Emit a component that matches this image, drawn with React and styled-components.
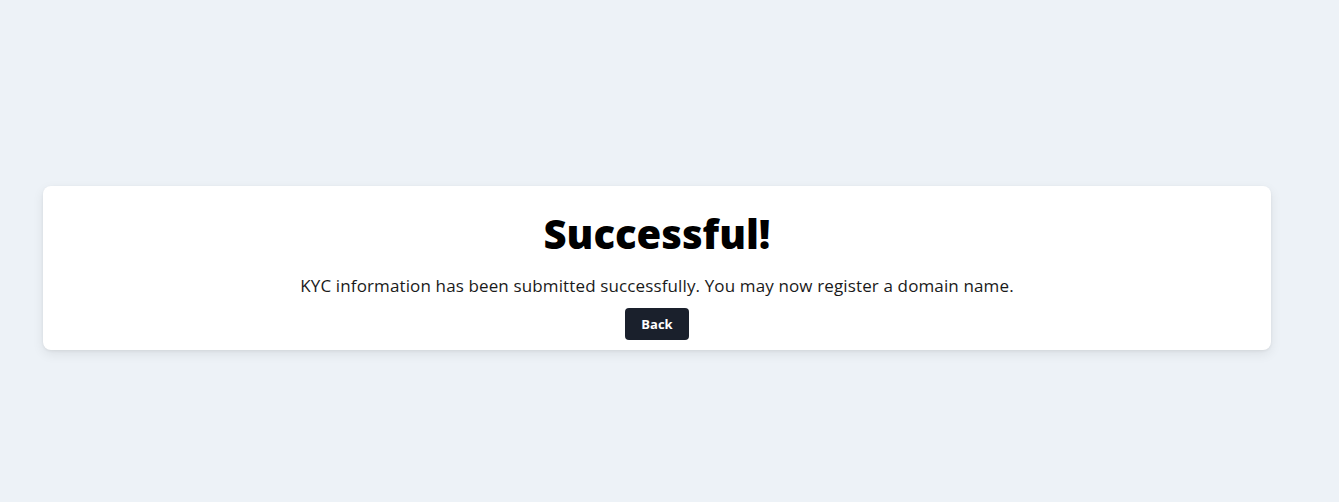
import React from "react";
import styled, { createGlobalStyle } from "styled-components";

const GlobalStyle = createGlobalStyle`
  html, body {
    margin: 0;
    padding: 0;
    background-color: #edf2f7;
    font-family: "Open Sans", "Liberation Sans", sans-serif;
  }
`;

const Page = styled.main`
  min-height: 502px;
  display: flex;
  align-items: center;
  padding: 34px 68px 0 43px;
  box-sizing: border-box;
`;

const Card = styled.section`
  flex: 1;
  background-color: #fff;
  border-radius: 8px;
  box-shadow: 0 4px 12px rgba(0, 0, 0, 0.08), 0 1px 3px rgba(0, 0, 0, 0.06);
  padding: 22px 20px 10px;
  display: flex;
  flex-direction: column;
  align-items: center;
`;

const Title = styled.h1`
  margin: 0;
  font-size: 40px;
  line-height: 52px;
  font-weight: 800;
  color: #000;
`;

const Message = styled.p`
  margin: 14px 0 10px;
  font-size: 17px;
  line-height: 24px;
  letter-spacing: 0.13px;
  color: #1a1a1a;
`;

const Button = styled.button`
  background-color: #1a202c;
  color: #fff;
  border: none;
  border-radius: 4px;
  height: 32px;
  padding: 0 16px;
  font-family: inherit;
  font-size: 13px;
  font-weight: 700;
  cursor: pointer;
`;

export default function App() {
  return (
    <>
      <GlobalStyle />
      <Page>
        <Card>
          <Title>Successful!</Title>
          <Message>
            KYC information has been submitted successfully. You may now register a domain name.
          </Message>
          <Button>Back</Button>
        </Card>
      </Page>
    </>
  );
}
